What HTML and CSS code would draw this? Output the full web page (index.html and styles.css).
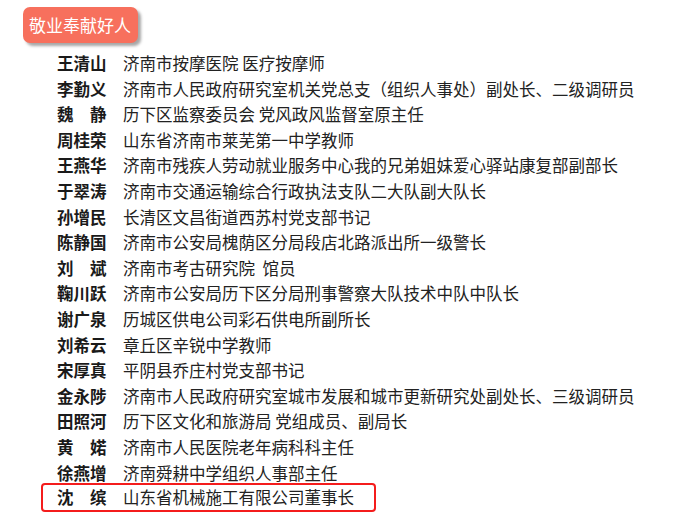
FILE: index.html
```html
<!DOCTYPE html>
<html lang="zh">
<head>
<meta charset="utf-8">
<link rel="stylesheet" href="styles.css">
</head>
<body>
<div class="page">
  <div class="badge">敬业奉献好人</div>
  <div class="list">
    <div class="row"><span class="name">王清山</span><span class="desc">济南市按摩医院 医疗按摩师</span></div>
    <div class="row"><span class="name">李勤义</span><span class="desc">济南市人民政府研究室机关党总支（组织人事处）副处长、二级调研员</span></div>
    <div class="row"><span class="name">魏　静</span><span class="desc">历下区监察委员会 党风政风监督室原主任</span></div>
    <div class="row"><span class="name">周桂荣</span><span class="desc">山东省济南市莱芜第一中学教师</span></div>
    <div class="row"><span class="name">王燕华</span><span class="desc">济南市残疾人劳动就业服务中心我的兄弟姐妹爱心驿站康复部副部长</span></div>
    <div class="row"><span class="name">于翠涛</span><span class="desc">济南市交通运输综合行政执法支队二大队副大队长</span></div>
    <div class="row"><span class="name">孙增民</span><span class="desc">长清区文昌街道西苏村党支部书记</span></div>
    <div class="row"><span class="name">陈静国</span><span class="desc">济南市公安局槐荫区分局段店北路派出所一级警长</span></div>
    <div class="row"><span class="name">刘　斌</span><span class="desc">济南市考古研究院&nbsp; 馆员</span></div>
    <div class="row"><span class="name">鞠川跃</span><span class="desc">济南市公安局历下区分局刑事警察大队技术中队中队长</span></div>
    <div class="row"><span class="name">谢广泉</span><span class="desc">历城区供电公司彩石供电所副所长</span></div>
    <div class="row"><span class="name">刘希云</span><span class="desc">章丘区辛锐中学教师</span></div>
    <div class="row"><span class="name">宋厚真</span><span class="desc">平阴县乔庄村党支部书记</span></div>
    <div class="row"><span class="name">金永陟</span><span class="desc">济南市人民政府研究室城市发展和城市更新研究处副处长、三级调研员</span></div>
    <div class="row"><span class="name">田照河</span><span class="desc">历下区文化和旅游局 党组成员、副局长</span></div>
    <div class="row"><span class="name">黄　婼</span><span class="desc">济南市人民医院老年病科科主任</span></div>
    <div class="row"><span class="name">徐燕增</span><span class="desc">济南舜耕中学组织人事部主任</span></div>
    <div class="row highlight"><span class="name">沈　缤</span><span class="desc">山东省机械施工有限公司董事长</span></div>
  </div>
</div>
</body>
</html>
```

FILE: styles.css
```css
html, body {
  margin: 0;
  padding: 0;
  background: #ffffff;
}

.page {
  padding: 7px 0 0 23px;
  font-family: "Noto Sans CJK SC", "Microsoft YaHei", sans-serif;
}

.badge {
  display: inline-block;
  box-sizing: border-box;
  width: 115px;
  height: 36px;
  line-height: 36px;
  padding-left: 6px;
  background: #f7705d;
  color: #ffffff;
  font-size: 17px;
  border-radius: 7px;
  box-shadow: 3px 3px 3px rgba(0, 0, 0, 0.35);
}

.list {
  margin-top: 8px;
  padding-left: 34px;
  font-size: 16.5px;
  line-height: 25.6px;
}

.row {
  display: flex;
  white-space: nowrap;
}

.name {
  width: 66px;
  flex: none;
  font-weight: bold;
  color: #1a1a1a;
}

.desc {
  color: #222222;
}

.highlight {
  box-sizing: border-box;
  width: 335px;
  height: 29px;
  line-height: 25px;
  margin: -3px 0 0 -16px;
  padding-left: 14px;
  border: 2px solid #f41c1c;
  border-radius: 4px;
}
```
